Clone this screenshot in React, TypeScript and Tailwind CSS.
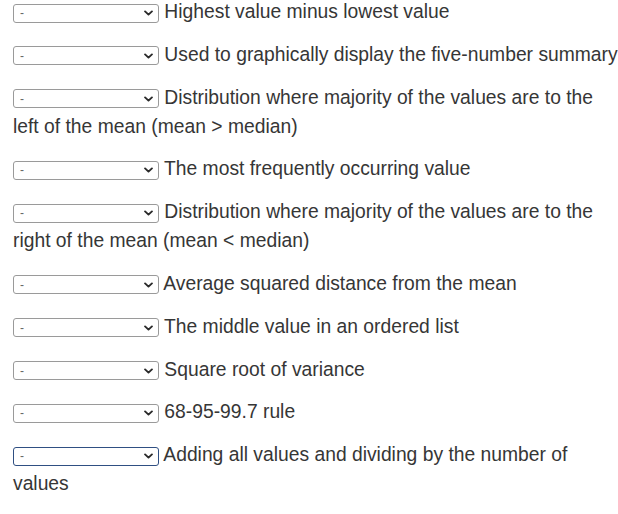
import React from "react";

const ITEMS: string[] = [
  "Highest value minus lowest value",
  "Used to graphically display the five-number summary",
  "Distribution where majority of the values are to the left of the mean (mean > median)",
  "The most frequently occurring value",
  "Distribution where majority of the values are to the right of the mean (mean < median)",
  "Average squared distance from the mean",
  "The middle value in an ordered list",
  "Square root of variance",
  "68-95-99.7 rule",
  "Adding all values and dividing by the number of values",
];

const Dropdown: React.FC<{ focused?: boolean }> = ({ focused }) => (
  <span
    role="combobox"
    className={`inline-flex align-top mt-[6.5px] w-[146px] h-[19px] items-center justify-between bg-white rounded-[3px] border pl-[6px] pr-[5px] ${
      focused ? "border-[1.5px] border-[#2f4f82]" : "border-[#9a9a9a]"
    }`}
  >
    <span className="text-[12px] leading-none text-[#666]">-</span>
    <svg
      viewBox="0 0 10 6"
      className="w-[9px] h-[6px]"
      fill="none"
      stroke="#2a2a2a"
      strokeWidth="2.1"
      strokeLinecap="round"
      strokeLinejoin="round"
    >
      <polyline points="1.2 1.2 5 4.8 8.8 1.2" />
    </svg>
  </span>
);

export default function App() {
  return (
    <div className="w-[618px] h-[514px] overflow-hidden bg-white">
      <div className="w-[621px] pl-[13px] -mt-[3px] font-['Liberation_Sans',Arial,sans-serif] text-[19.3px] leading-[29px] text-[#363636]">
        {ITEMS.map((text, i) => (
          <p key={i} className="mb-[13.8px]">
            <Dropdown focused={i === ITEMS.length - 1} /> {text}
          </p>
        ))}
      </div>
    </div>
  );
}
